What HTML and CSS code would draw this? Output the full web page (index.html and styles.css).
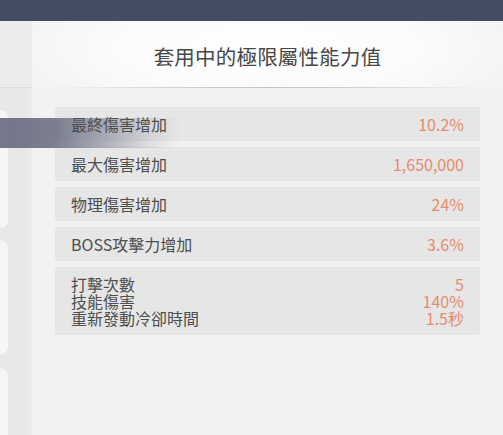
FILE: index.html
```html
<!DOCTYPE html>
<html>
<head>
<meta charset="utf-8">
<link rel="stylesheet" href="styles.css">
</head>
<body>
<div class="topbar"></div>
<div class="main">
  <div class="side">
    <div class="side-head"></div>
    <div class="card card-1"></div>
    <div class="card card-2"></div>
    <div class="card card-3"></div>
  </div>
  <div class="panel">
    <div class="panel-head">
      <div class="title">套用中的極限屬性能力值</div>
    </div>
    <div class="rows">
      <div class="row"><span class="label">最終傷害增加</span><span class="value">10.2%</span></div>
      <div class="row"><span class="label">最大傷害增加</span><span class="value">1,650,000</span></div>
      <div class="row"><span class="label">物理傷害增加</span><span class="value">24%</span></div>
      <div class="row"><span class="label">BOSS攻擊力增加</span><span class="value">3.6%</span></div>
      <div class="row row-multi">
        <div class="label multi"><div class="line">打擊次數</div><div class="line">技能傷害</div><div class="line">重新發動冷卻時間</div></div>
        <div class="value multi"><div class="line">5</div><div class="line">140%</div><div class="line">1.5秒</div></div>
      </div>
    </div>
  </div>
</div>
<div class="band"></div>
</body>
</html>
```
FILE: styles.css
```css
html, body {
  margin: 0;
  padding: 0;
}
body {
  width: 503px;
  height: 435px;
  overflow: hidden;
  background: #f2f2f2;
  font-family: "Noto Sans CJK TC", "Noto Sans", sans-serif;
  position: relative;
}
.topbar {
  height: 21px;
  background: #434c60;
}
.main {
  display: flex;
  height: 414px;
}
.side {
  width: 32px;
  background: linear-gradient(to right, #e8e8e8 0, #e8e8e8 26px, #eeeeee 32px);
  display: flex;
  flex-direction: column;
  flex-shrink: 0;
}
.side-head {
  height: 66px;
  background: #ececec;
  border-bottom: 1px solid #dcdcdc;
  flex-shrink: 0;
}
.card {
  width: 8px;
  background: #f6f6f6;
  border-radius: 0 8px 8px 0;
  flex-shrink: 0;
}
.card-1 {
  margin-top: 22px;
  height: 118px;
}
.card-2 {
  margin-top: 12px;
  height: 115px;
}
.card-3 {
  margin-top: 13px;
  height: 80px;
}
.panel {
  flex: 1;
  display: flex;
  flex-direction: column;
  background: #f2f2f2;
}
.panel-head {
  height: 66px;
  display: flex;
  align-items: center;
  justify-content: center;
  background: radial-gradient(ellipse 60% 120% at 50% 40%, #ffffff 0, #fbfbfb 55%, #f2f2f2 100%);
  border-bottom: 1px solid transparent;
  border-image: linear-gradient(to right, rgba(200,200,200,0) 0, rgba(200,200,200,0) 3%, #cfcfcf 30%, #c4c4c4 50%, #cfcfcf 70%, rgba(200,200,200,0) 97%) 1;
}
.title {
  font-size: 20.5px;
  color: #474747;
  letter-spacing: 0.2px;
  padding-top: 3px;
}
.rows {
  display: flex;
  flex-direction: column;
  gap: 6px;
  margin: 19px 23px 0 23px;
}
.row {
  height: 34px;
  background: #e6e6e6;
  border-radius: 3px;
  display: flex;
  align-items: center;
  justify-content: space-between;
  padding: 0 16px;
}
.label {
  font-size: 16px;
  color: #4e4e4e;
  position: relative;
  z-index: 2;
}
.value {
  font-size: 16px;
  color: #e58c6c;
}
.row-multi {
  height: 68px;
  align-items: flex-start;
  padding-top: 9px;
  box-sizing: border-box;
}
.multi {
  display: flex;
  flex-direction: column;
}
.line {
  height: 17px;
  line-height: 17px;
}
.value.multi {
  align-items: flex-end;
}
.band {
  position: absolute;
  left: 0;
  top: 118px;
  width: 180px;
  height: 30px;
  z-index: 1;
  background: linear-gradient(to right, rgba(102,106,126,0.9) 0, rgba(102,106,126,0.85) 30%, rgba(110,114,134,0.5) 60%, rgba(120,124,144,0.15) 85%, rgba(120,124,144,0) 100%);
  pointer-events: none;
}
```
